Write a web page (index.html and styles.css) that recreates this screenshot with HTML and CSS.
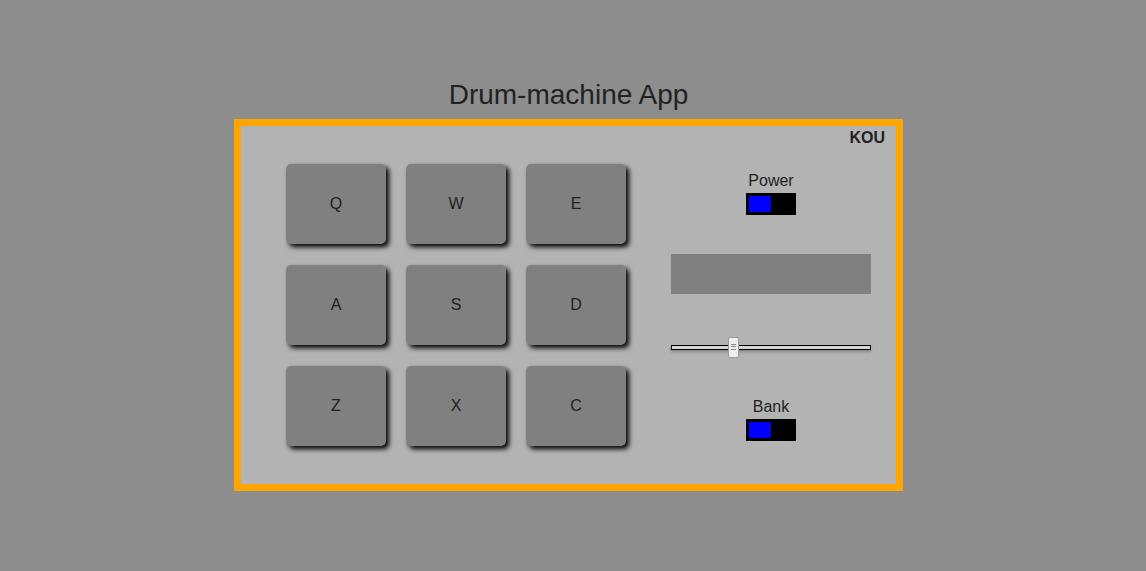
FILE: index.html
```html
<!DOCTYPE html>
<html>
<head>
<meta charset="utf-8">
<link rel="stylesheet" href="styles.css">
</head>
<body>
<main class="page">
  <h1 class="title">Drum-machine App</h1>
  <div class="machine">
    <div class="brand">KOU</div>
    <div class="body">
      <div class="pads">
        <div class="pad">Q</div>
        <div class="pad">W</div>
        <div class="pad">E</div>
        <div class="pad">A</div>
        <div class="pad">S</div>
        <div class="pad">D</div>
        <div class="pad">Z</div>
        <div class="pad">X</div>
        <div class="pad">C</div>
      </div>
      <div class="controls">
        <div class="control power">
          <p class="label">Power</p>
          <div class="toggle"><div class="knob"></div></div>
        </div>
        <div class="display"></div>
        <input class="volume" type="range" min="0" max="1" step="0.01" value="0.3">
        <div class="control bank">
          <p class="label">Bank</p>
          <div class="toggle"><div class="knob"></div></div>
        </div>
      </div>
    </div>
  </div>
</main>
</body>
</html>
```

FILE: styles.css
```css
html, body {
  margin: 0;
  padding: 0;
}
body {
  background: #8d8d8d;
  font-family: "Liberation Sans", Arial, sans-serif;
  color: #222;
  height: 571px;
}
.page {
  display: flex;
  flex-direction: column;
  align-items: center;
  padding-right: 9px;
  padding-top: 79px;
}
.title {
  margin: 0 0 8px;
  font-size: 28px;
  line-height: 32px;
  font-weight: normal;
  color: #222;
}
.machine {
  width: 655px;
  height: 358px;
  border: 7px solid #ffa500;
  background: #b3b3b3;
}
.brand {
  text-align: right;
  font-weight: bold;
  font-size: 16px;
  line-height: 18px;
  padding: 3px 11px 0 0;
  color: #222;
}
.body {
  display: flex;
  padding: 17px 25px 0 45px;
  gap: 45px;
}
.pads {
  display: grid;
  grid-template-columns: repeat(3, 100px);
  grid-auto-rows: 80px;
  column-gap: 20px;
  row-gap: 21px;
}
.pad {
  background: #808080;
  border-radius: 5px;
  box-shadow: 3px 3px 5px #000;
  display: flex;
  align-items: center;
  justify-content: center;
  font-size: 16px;
  color: #222;
}
.controls {
  width: 200px;
  display: flex;
  flex-direction: column;
  align-items: center;
  padding-top: 8px;
}
.control {
  display: flex;
  flex-direction: column;
  align-items: center;
}
.label {
  margin: 0 0 3px;
  font-size: 16px;
  line-height: 18px;
  color: #222;
}
.toggle {
  width: 50px;
  height: 22px;
  box-sizing: border-box;
  background: #000;
  padding: 3px;
}
.knob {
  width: 22px;
  height: 16px;
  background: #0000ff;
}
.display {
  width: 200px;
  height: 40px;
  background: #808080;
  margin-top: 39px;
}
.volume {
  -webkit-appearance: none;
  appearance: none;
  width: 200px;
  height: 21px;
  margin: 43px 0 0;
  padding: 0;
  background: transparent;
}
.volume::-webkit-slider-runnable-track {
  height: 5px;
  box-sizing: border-box;
  background: #d6d6d6;
  border: 1px solid #000;
  box-shadow: 0 2px 3px rgba(0, 0, 0, 0.25);
}
.volume::-webkit-slider-thumb {
  -webkit-appearance: none;
  appearance: none;
  width: 11px;
  height: 21px;
  margin-top: -9px;
  box-sizing: border-box;
  border: 1px solid #9c9a96;
  border-radius: 2px;
  background:
    linear-gradient(#8a8884, #8a8884) 2px 6px / 5px 1px no-repeat,
    linear-gradient(#8a8884, #8a8884) 2px 8px / 5px 1px no-repeat,
    linear-gradient(#8a8884, #8a8884) 2px 11px / 5px 1px no-repeat,
    #efedea;
}
.bank {
  margin-top: 40px;
}
```
